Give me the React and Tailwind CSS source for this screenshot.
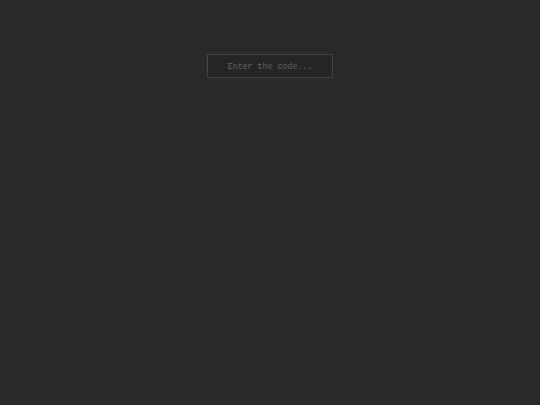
import React, { useState } from 'react';

const App = () => {
    const [code, setCode] = useState('');

    return (
        <div className="min-h-screen w-full bg-[#2a2a2a] flex flex-col items-center pt-[54px]">
            <input
                type="text"
                value={code}
                onChange={(e) => setCode(e.target.value)}
                placeholder="Enter the code..."
                className="w-[126px] h-[24px] pt-[1px] bg-[#262626] border border-[#404040] text-center text-[8.3px] text-[#888] placeholder:text-[#626262] outline-none font-['Liberation_Mono',monospace]"
            />
        </div>
    );
};

export default App;
